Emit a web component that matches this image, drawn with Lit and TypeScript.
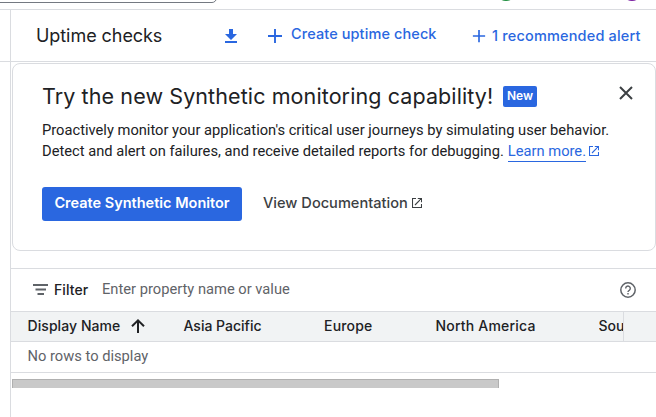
import { LitElement, html, css } from "lit";
import { customElement } from "lit/decorators.js";

const openIcon = html`<svg class="open" viewBox="0 0 10 10" width="10" height="10">
  <path d="M4 .5H.5v9h9V6M5.8 .5h3.7v3.7M9.3 .7L3 7" fill="none" stroke="currentColor" stroke-width="1.1" />
</svg>`;

const plus = (size: number) => html`<svg class="plus" viewBox="0 0 16 16" width=${size} height=${size}>
  <path d="M8 1v14M1 8h14" fill="none" stroke="currentColor" stroke-width="1.9" />
</svg>`;

@customElement("app-root")
export class AppRoot extends LitElement {
  static styles = css`
    :host { display: block; width: 656px; height: 417px; overflow: hidden; background: #fff; color: #202124;
      font-family: Roboto, sans-serif; font-size: 14px; }
    * { box-sizing: border-box; }
    svg { display: block; flex: none; }
    .g { font-family: Inter, sans-serif; }
    .top { height: 10px; border-bottom: 1px solid #dadce0; position: relative; overflow: hidden; }
    .search { position: absolute; left: -10px; top: -27px; width: 227px; height: 30px; border: 1px solid #747981; border-radius: 5px; }
    .dot { position: absolute; width: 20px; height: 20px; border-radius: 50%; top: -19px; }
    .green { left: 496px; background: #1e8e3e; }
    .purple { left: 622px; background: #7b1fa2; }
    .body { display: flex; height: 407px; }
    .rail { width: 11px; border-right: 1px solid #dadce0; flex: none; }
    .rail i { display: block; height: 52px; border-bottom: 1px solid #dadce0; }
    main { flex: 1; min-width: 0; }
    .bar { height: 52px; border-bottom: 1px solid #dadce0; display: flex; align-items: center; padding-left: 25px; white-space: nowrap; }
    .title { font-size: 18px; width: 189px; letter-spacing: -.06px; }
    .blue { color: #2a67e0; }
    .act { display: flex; align-items: center; font-weight: 500; font-size: 14.5px; }
    .dl { margin-right: 30px; }
    .create { width: 205px; gap: 8px; letter-spacing: .1px; }
    .create span { padding-bottom: 4px; }
    .alert { gap: 6px; letter-spacing: .17px; }
    .alert span { padding-bottom: 1px; }
    .card { margin: 1px 0 0 1px; height: 188px; border: 1px solid #dadce0; border-radius: 8px; padding: 18px 22px 0 29px; }
    .head { display: flex; align-items: center; height: 28px; }
    .head h2 { margin: 0; font-weight: 400; font-size: 21.5px; width: 461px; white-space: nowrap; letter-spacing: .1px; }
    .new { width: 34px; height: 21px; background: #2a67e0; color: #fff; border-radius: 2px; font-size: 12px; font-weight: 600; text-align: center; line-height: 20px; }
    .close { margin: -6px .5px 0 auto; }
    .copy { margin-top: 10px; font-size: 14.7px; line-height: 21px; white-space: nowrap; }
    .row { display: flex; align-items: center; height: 21px; }
    .row .blue { padding-bottom: 1px; }
    .more { color: #2a67e0; border-bottom: 1px solid; line-height: 19px; margin: 0 3px 0 4px; }
    .btns { display: flex; align-items: center; margin-top: 25px; font-weight: 500; }
    .btn { width: 200px; height: 34px; background: #2a67e0; color: #fff; border-radius: 3px; text-align: center; line-height: 32px; font-size: 14.5px; font-weight: 600; white-space: nowrap; }
    .doc { display: flex; align-items: center; gap: 4px; margin-left: 21px; color: #3c4043; height: 34px; padding-bottom: 2px; font-size: 14.6px; white-space: nowrap; }
    .filter { margin-top: 17px; height: 44px; border: 1px solid #dadce0; border-width: 1px 0; display: flex; align-items: center; padding: 0 20.5px 0 22px; }
    .funnel { margin-bottom: 1px; }
    .fl { width: 48px; font-weight: 500; margin-left: 6px; letter-spacing: .1px; padding-bottom: 1px; }
    .ph { color: #5f6368; font-size: 14.7px; padding-bottom: 2px; }
    .help { margin: 0 0 1px auto; }
    .th { height: 30px; background: #f1f3f4; border-bottom: 1px solid #dadce0; display: flex; font-weight: 500; line-height: 28px; white-space: nowrap; padding-left: 16.5px; }
    .c1 { width: 156px; height: 28px; display: flex; align-items: center; gap: 10.5px; letter-spacing: .07px; }
    .c2 { width: 140.5px; } .c3 { width: 111.5px; letter-spacing: .2px; } .c4 { width: 163px; letter-spacing: .2px; }
    .c5 { width: 25.5px; overflow: hidden; border-right: 1px solid #dadce0; }
    .empty { height: 31px; border-bottom: 1px solid #dadce0; color: #5f6368; padding-left: 16.5px; line-height: 28px; font-size: 14.7px; }
    .scroll { margin: 6px 0 0 1px; width: 487px; height: 9px; background: #c9c9c9; border: 1px solid #b0b0b0; border-bottom: 0; }
  `;

  render() {
    return html`
      <div class="top"><div class="search"></div><div class="dot green"></div><div class="dot purple"></div></div>
      <div class="body">
        <div class="rail"><i></i></div>
        <main>
          <div class="bar g">
            <span class="title">Uptime checks</span>
            <svg class="dl blue" viewBox="0 0 12 14" width="12" height="14"><path d="M4 0h4v5h4L6 11 0 5h4zM0 12h12v2H0z" fill="currentColor" /></svg>
            <div class="act create blue">${plus(16)}<span>Create uptime check</span></div>
            <div class="act alert blue">${plus(14)}<span>1 recommended alert</span></div>
          </div>
          <section class="card">
            <div class="head g">
              <h2>Try the new Synthetic monitoring capability!</h2>
              <span class="new">New</span>
              <svg class="close" viewBox="0 0 14 14" width="14" height="14"><path d="M1 1l12 12M13 1L1 13" stroke="#3c4043" stroke-width="2" /></svg>
            </div>
            <div class="copy">
              <div>Proactively monitor your application's critical user journeys by simulating user behavior.</div>
              <div class="row"><span>Detect and alert on failures, and receive detailed reports for debugging.</span><span class="more">Learn more.</span><span class="blue">${openIcon}</span></div>
            </div>
            <div class="btns g"><div class="btn">Create Synthetic Monitor</div><div class="doc"><span>View Documentation</span>${openIcon}</div></div>
          </section>
          <div class="filter">
            <svg class="funnel" viewBox="0 0 15 11" width="15" height="11"><path d="M0 1h15M2.500 5.500h10.500M4.500 10h6.500" stroke="#5f6368" stroke-width="1.8" /></svg>
            <span class="fl g">Filter</span><span class="ph">Enter property name or value</span>
            <svg class="help" viewBox="0 0 16 16" width="16" height="16"><circle cx="8" cy="8" r="7.2" fill="none" stroke="#5f6368" stroke-width="1.5" /><path d="M5.700 6.400a2.300 2.300 0 1 1 3.700 1.800C8.500 8.900 8 9.100 8 10.100M8 11.100v1.500" fill="none" stroke="#5f6368" stroke-width="1.4" /></svg>
          </div>
          <div class="th g">
            <div class="c1"><span>Display Name</span><svg viewBox="0 0 14 14" width="14" height="14"><path d="M7 14V1.500M1 7.300L7 1.400l6 5.900" fill="none" stroke="#202124" stroke-width="2" /></svg></div>
            <div class="c2">Asia Pacific</div><div class="c3">Europe</div><div class="c4">North America</div><div class="c5">Sou</div>
          </div>
          <div class="empty">No rows to display</div>
          <div class="scroll"></div>
        </main>
      </div>`;
  }
}
